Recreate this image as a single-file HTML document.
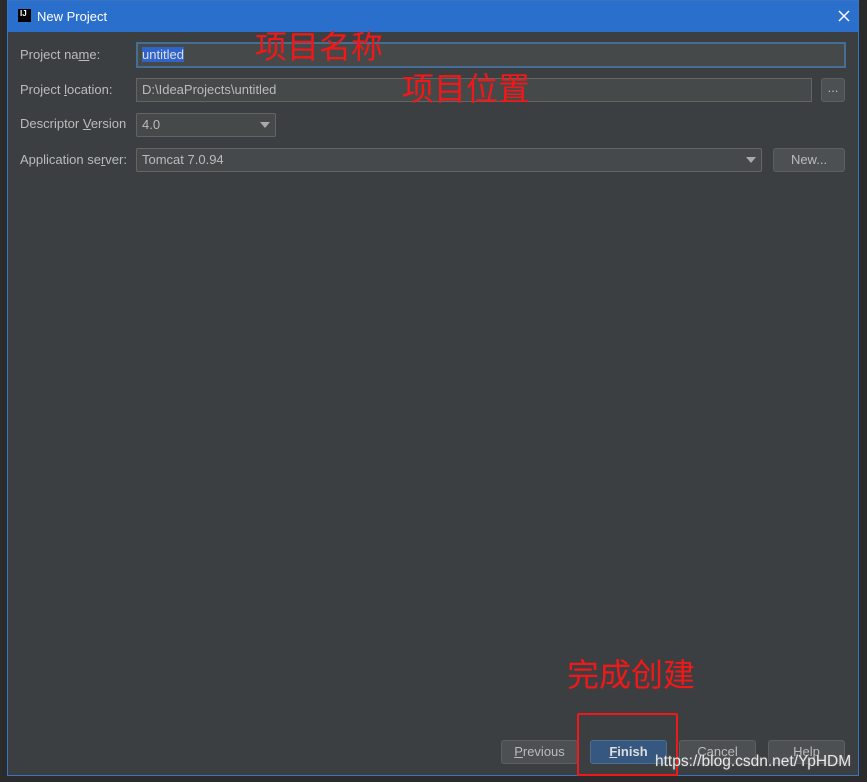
<!DOCTYPE html>
<html><head><meta charset="utf-8"><style>
*{margin:0;padding:0;box-sizing:border-box}
body{width:867px;height:782px;background:#2b2b2b;position:relative;overflow:hidden;font-family:"Liberation Sans","Noto Sans CJK SC",sans-serif;font-size:13px;color:#bbbbbb}
.dlg{position:absolute;left:7px;top:0;width:852px;height:776px;background:#3c3f41;border:1px solid #3873c4}
.title{position:absolute;left:0;top:0;width:100%;height:31px;background:#2a6fcb;color:#fff;font-size:13px}
.a{position:absolute;white-space:nowrap}
.field{position:absolute;background:#45494a;border:1px solid #646464;color:#bbb;padding-left:5px;line-height:22px;font-size:13px}
.btn{position:absolute;background:#4c5052;border:1px solid #5e6060;border-radius:3px;color:#bbb;text-align:center;line-height:22px;font-size:13px}
.red{position:absolute;color:#f01818;font-size:32px;line-height:36px;font-family:"Noto Sans CJK SC",sans-serif;white-space:nowrap}
.arr{position:absolute;width:0;height:0;border-left:5px solid transparent;border-right:5px solid transparent;border-top:6px solid #aaa}
</style></head><body>
<div class="dlg">
 <div class="title">
  <div class="a" style="left:10px;top:8px;width:13px;height:13px;background:#000;color:#fff;font-size:8px;font-weight:bold;line-height:9px;padding-left:2px">IJ</div>
  <div class="a" style="left:29px;top:8px">New Project</div>
  <svg class="a" style="left:830px;top:9px" width="12" height="12"><path d="M1 1L11 11M11 1L1 11" stroke="#fff" stroke-width="1.5"/></svg>
 </div>
 <div class="a" style="left:12px;top:46px">Project na<u>m</u>e:</div>
 <div class="field" style="left:128px;top:41px;width:710px;height:26px;border:2px solid #466d94;line-height:22px;padding-left:4px"><span style="background:#2f65ca;color:#ddd">untitled</span></div>
 <div class="a" style="left:12px;top:81px">Project <u>l</u>ocation:</div>
 <div class="field" style="left:128px;top:77px;width:676px;height:24px">D:\IdeaProjects\untitled</div>
 <div class="btn" style="left:813px;top:77px;width:24px;height:24px;line-height:18px">...</div>
 <div class="a" style="left:12px;top:115px">Descriptor <u>V</u>ersion</div>
 <div class="field" style="left:128px;top:112px;width:140px;height:24px;border-radius:2px">4.0</div>
 <div class="arr" style="left:252px;top:121px"></div>
 <div class="a" style="left:12px;top:151px">Application se<u>r</u>ver:</div>
 <div class="field" style="left:128px;top:147px;width:626px;height:24px;border-radius:2px">Tomcat 7.0.94</div>
 <div class="arr" style="left:738px;top:156px"></div>
 <div class="btn" style="left:765px;top:147px;width:72px;height:24px">New...</div>
 <div class="btn" style="left:493px;top:739px;width:77px;height:24px"><u>P</u>revious</div>
 <div class="btn" style="left:582px;top:739px;width:77px;height:24px;background:#365880;border-color:#4c708c;color:#ddd;font-weight:bold"><u>F</u>inish</div>
 <div class="btn" style="left:671px;top:739px;width:77px;height:24px">Cancel</div>
 <div class="btn" style="left:760px;top:739px;width:77px;height:24px">Help</div>
</div>
<div class="red" style="left:255px;top:27px">项目名称</div>
<div class="red" style="left:402px;top:69px">项目位置</div>
<div class="red" style="left:567px;top:655px">完成创建</div>
<div class="a" style="left:577px;top:713px;width:101px;height:63px;border:2px solid #f01818;border-radius:2px"></div>
<div class="a" style="left:655px;top:753px;color:#e8e8e8;font-size:15.5px;text-shadow:0 0 2px #666">https://blog.csdn.net/YpHDM</div>
</body></html>
